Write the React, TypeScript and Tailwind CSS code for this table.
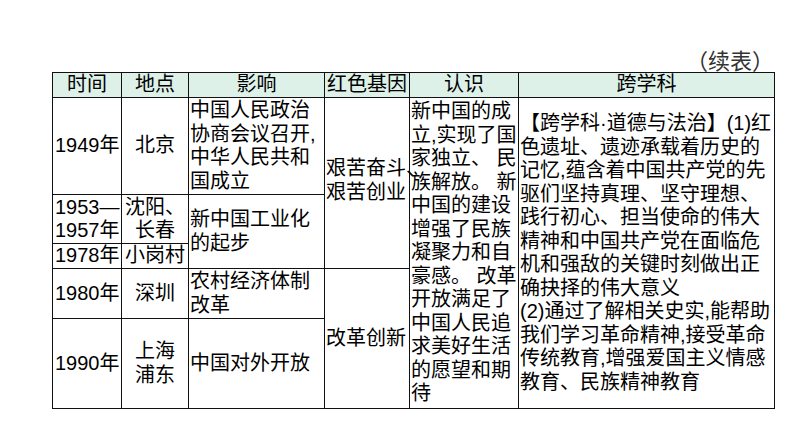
import React from "react";

const B = "border-r border-b border-[#111]";
const C = `${B} flex items-center overflow-visible`;

function Lines({ lines, className = "" }: { lines: string[]; className?: string }) {
  return (
    <div className={`whitespace-nowrap ${className}`}>
      {lines.map((l, i) => (
        <div key={i}>{l}</div>
      ))}
    </div>
  );
}

export default function App() {
  return (
    <div className="w-[794px] h-[447px] bg-white font-['Liberation_Sans','Noto_Sans_CJK_SC',sans-serif] text-[20px] leading-[23.5px] text-black">
      <div className="pt-[47px] pl-[52px]">
        <div className="w-[723px] flex justify-end pr-[1px] h-[25px] items-center text-[#333] text-[22px] font-['Noto_Sans_CJK_SC',sans-serif]">
          （续表）
        </div>
        <div className="grid w-[723px] border-l border-t border-[#111] grid-cols-[69px_67px_136px_85px_109px_256px] grid-rows-[25px_97px_49px_25px_50px_90px]">
          {/* header */}
          {["时间", "地点", "影响", "红色基因", "认识", "跨学科"].map((h) => (
            <div key={h} className={`${C} justify-center bg-[#ddf1e9]`}>
              {h}
            </div>
          ))}

          {/* row 1949 */}
          <div className={`${C} col-start-1 row-start-2 pl-[2px]`}>1949年</div>
          <div className={`${C} col-start-2 row-start-2 justify-center`}>北京</div>
          <div className={`${C} col-start-3 row-start-2 pl-[1px]`}>
            <Lines lines={["中国人民政治", "协商会议召开,", "中华人民共和", "国成立"]} />
          </div>
          <div className={`${C} col-start-4 row-start-2 row-span-3 pl-[1px]`}>
            <Lines lines={["艰苦奋斗、", "艰苦创业"]} className="relative z-10 mt-[-5px]" />
          </div>
          <div className={`${C} col-start-5 row-start-2 row-span-5 pl-[1px]`}>
            <Lines
              lines={[
                "新中国的成",
                "立,实现了国",
                "家独立、 民",
                "族解放。 新",
                "中国的建设",
                "增强了民族",
                "凝聚力和自",
                "豪感。 改革",
                "开放满足了",
                "中国人民追",
                "求美好生活",
                "的愿望和期",
                "待",
              ]}
            />
          </div>
          <div className={`${C} col-start-6 row-start-2 row-span-5 pl-[1px]`}>
            <Lines
              lines={[
                "【跨学科·道德与法治】(1)红",
                "色遗址、遗迹承载着历史的",
                "记忆,蕴含着中国共产党的先",
                "驱们坚持真理、坚守理想、",
                "践行初心、担当使命的伟大",
                "精神和中国共产党在面临危",
                "机和强敌的关键时刻做出正",
                "确抉择的伟大意义",
                "(2)通过了解相关史实,能帮助",
                "我们学习革命精神,接受革命",
                "传统教育,增强爱国主义情感",
                "教育、民族精神教育",
              ]}
            />
          </div>

          {/* row 1953 */}
          <div className={`${C} col-start-1 row-start-3 pl-[2px]`}>
            <Lines lines={["1953—", "1957年"]} />
          </div>
          <div className={`${C} col-start-2 row-start-3 justify-center text-center`}>
            <Lines lines={["沈阳、", "长春"]} />
          </div>
          <div className={`${C} col-start-3 row-start-3 row-span-2 pl-[1px]`}>
            <Lines lines={["新中国工业化", "的起步"]} />
          </div>

          {/* row 1978 */}
          <div className={`${C} col-start-1 row-start-4 pl-[2px]`}>1978年</div>
          <div className={`${C} col-start-2 row-start-4 justify-center`}>小岗村</div>

          {/* row 1980 */}
          <div className={`${C} col-start-1 row-start-5 pl-[2px]`}>1980年</div>
          <div className={`${C} col-start-2 row-start-5 justify-center`}>深圳</div>
          <div className={`${C} col-start-3 row-start-5 pl-[1px]`}>
            <Lines lines={["农村经济体制", "改革"]} />
          </div>
          <div className={`${C} col-start-4 row-start-5 row-span-2 pl-[1px]`}>改革创新</div>

          {/* row 1990 */}
          <div className={`${C} col-start-1 row-start-6 pl-[2px]`}>1990年</div>
          <div className={`${C} col-start-2 row-start-6 justify-center text-center`}>
            <Lines lines={["上海", "浦东"]} />
          </div>
          <div className={`${C} col-start-3 row-start-6 pl-[1px]`}>中国对外开放</div>
        </div>
      </div>
    </div>
  );
}
